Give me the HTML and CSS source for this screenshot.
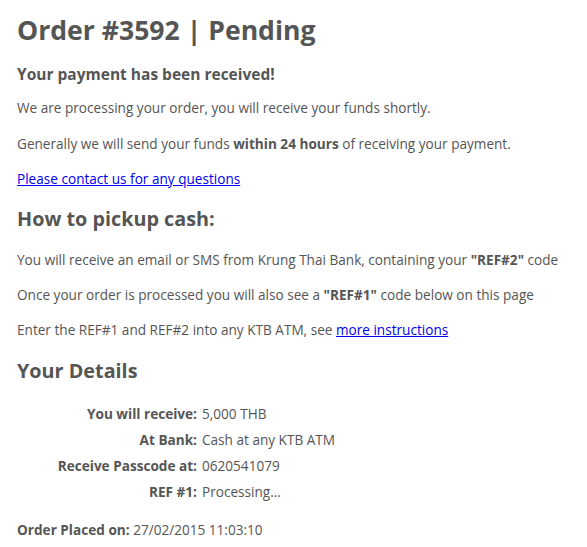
FILE: index.html
```html
<!DOCTYPE html>
<html>
<head>
<meta charset="utf-8">
<link rel="stylesheet" href="styles.css">
</head>
<body>
<div class="page">
  <h1 class="title">Order #3592 | Pending</h1>
  <p class="lead">Your payment has been received!</p>
  <p class="text t1">We are processing your order, you will receive your funds shortly.</p>
  <p class="text t2">Generally we will send your funds <b>within 24 hours</b> of receiving your payment.</p>
  <p class="text t3"><a href="#">Please contact us for any questions</a></p>
  <h2 class="section s1">How to pickup cash:</h2>
  <p class="text t4">You will receive an email or SMS from Krung Thai Bank, containing your <b>"REF#2"</b> code</p>
  <p class="text t5">Once your order is processed you will also see a <b>"REF#1"</b> code below on this page</p>
  <p class="text t5">Enter the REF#1 and REF#2 into any KTB ATM, see <a href="#">more instructions</a></p>
  <h2 class="section s2">Your Details</h2>
  <div class="details">
    <div class="label">You will receive:</div><div class="value">5,000 THB</div>
    <div class="label">At Bank:</div><div class="value">Cash at any KTB ATM</div>
    <div class="label">Receive Passcode at:</div><div class="value">0620541079</div>
    <div class="label">REF #1:</div><div class="value">Processing...</div>
  </div>
  <p class="text placed"><b>Order Placed on:</b> 27/02/2015 11:03:10</p>
</div>
</body>
</html>
```
FILE: styles.css
```css
html, body {
  margin: 0;
  padding: 0;
  background: #fff;
}
body {
  font-family: "Open Sans", "DejaVu Sans", sans-serif;
  color: #555;
}
.page {
  padding: 12px 0 0 17px;
}
.title {
  margin: 0;
  font-size: 26.6px;
  line-height: 36px;
  font-weight: 700;
}
.lead {
  margin: 16px 0 0;
  font-size: 15.5px;
  line-height: 20px;
  font-weight: 700;
}
.text {
  margin: 0;
  font-size: 13.6px;
  line-height: 20px;
}
.text b { font-weight: 700; }
.t1 { margin-top: 14px; }
.t2 { margin-top: 16px; }
.t3 { margin-top: 15px; }
.t4 { margin-top: 17px; }
.t5 { margin-top: 15px; }
.text a { color: #00e; text-decoration: underline; }
.section {
  margin: 0;
  font-size: 19.8px;
  line-height: 28px;
  font-weight: 700;
}
.s1 { margin-top: 16px; }
.s2 { margin-top: 17px; }
.details {
  margin-top: 16px;
  display: grid;
  grid-template-columns: 197px auto;
  column-gap: 5px;
  margin-left: -17px;
  font-size: 13.6px;
  line-height: 26px;
}
.label {
  text-align: right;
  font-weight: 700;
}
.placed { margin-top: 15px; }
```
